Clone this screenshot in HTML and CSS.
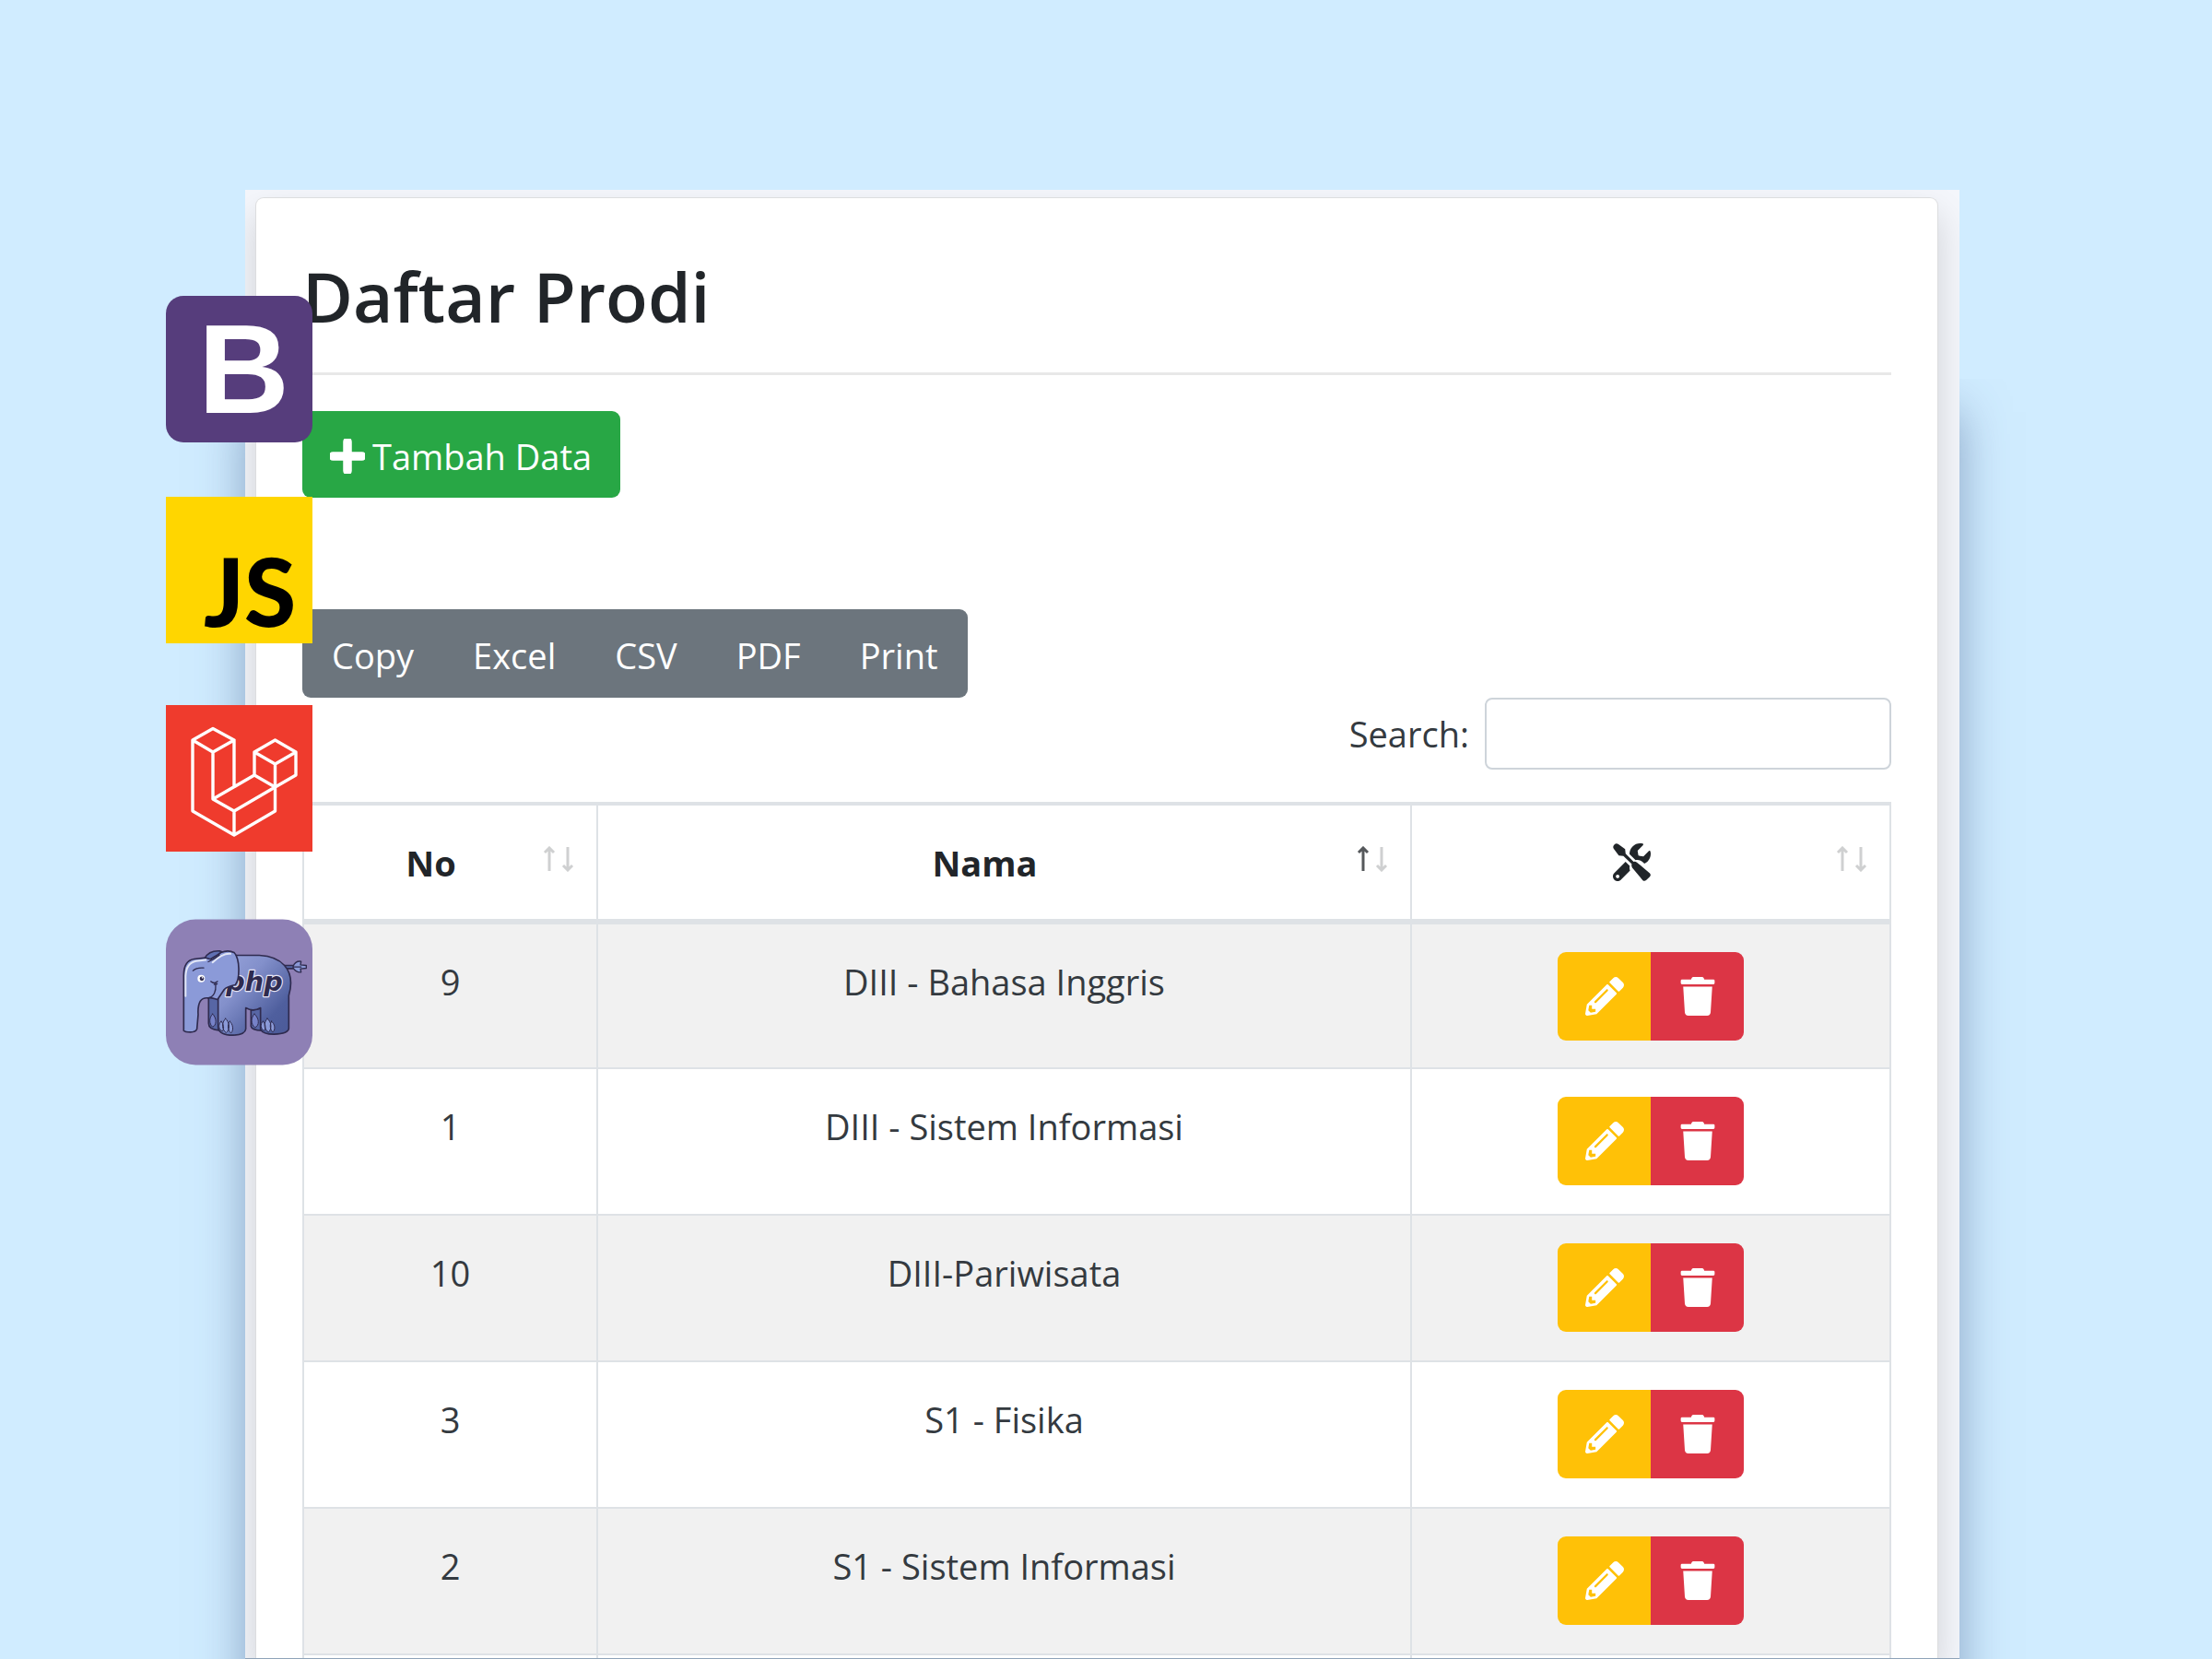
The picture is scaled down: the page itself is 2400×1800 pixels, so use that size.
FILE: index.html
```html
<!DOCTYPE html>
<html lang="id">
<head>
<meta charset="utf-8">
<title>Daftar Prodi</title>
<link rel="stylesheet" href="styles.css">
</head>
<body>
<svg class="sprite" aria-hidden="true">
  <symbol id="i-pencil" viewBox="0 0 512 512"><path d="M497.9 142.1l-46.1 46.1c-4.7 4.7-12.3 4.7-17 0l-111-111c-4.7-4.7-4.7-12.3 0-17l46.1-46.1c18.7-18.7 49.1-18.7 67.9 0l60.1 60.1c18.8 18.7 18.8 49.1 0 67.9zM284.2 99.8L21.6 362.4.4 483.9c-2.9 16.4 11.4 30.6 27.8 27.8l121.5-21.3 262.6-262.6c4.7-4.7 4.7-12.3 0-17l-111-111c-4.8-4.7-12.4-4.7-17.1 0zM124.1 339.9c-5.5-5.5-5.5-14.3 0-19.8l154-154c5.5-5.5 14.3-5.5 19.8 0s5.5 14.3 0 19.8l-154 154c-5.5 5.5-14.3 5.5-19.8 0zM88 424h48v36.3l-64.5 11.3-31.1-31.1L51.7 376H88v48z"/></symbol>
  <symbol id="i-trash" viewBox="0 0 448 512"><path d="M432 32H312l-9.4-18.7A24 24 0 0 0 281.1 0H166.8a23.72 23.72 0 0 0-21.4 13.3L136 32H16A16 16 0 0 0 0 48v32a16 16 0 0 0 16 16h416a16 16 0 0 0 16-16V48a16 16 0 0 0-16-16zM53.2 467a48 48 0 0 0 47.9 45h245.8a48 48 0 0 0 47.9-45L416 128H32z"/></symbol>
  <symbol id="i-up" viewBox="0 0 14 28"><path d="M7 27V2M2 7l5-5 5 5" fill="none" stroke="currentColor" stroke-width="3"/></symbol>
  <symbol id="i-down" viewBox="0 0 14 28"><path d="M7 1v25M2 21l5 5 5-5" fill="none" stroke="currentColor" stroke-width="3"/></symbol>
</svg>

<main class="frame">
  <div class="shadow-clip" aria-hidden="true"><div class="shadow"></div></div>
  <div class="backdrop">
    <section class="card">
      <h1 class="title">Daftar Prodi</h1>
      <hr class="rule">
      <button class="btn-add" type="button">
        <svg class="icon-plus" viewBox="0 0 36 36"><path d="M18 3v30M3 18h30" fill="none" stroke="currentColor" stroke-width="9" stroke-linecap="round"/></svg>
        Tambah Data
      </button>
      <div class="exports">
        <button type="button">Copy</button><button type="button">Excel</button><button type="button">CSV</button><button type="button">PDF</button><button type="button">Print</button>
      </div>
      <div class="search">
        <label for="search">Search:</label>
        <input id="search" type="search">
      </div>
      <table class="grid">
        <colgroup><col class="col-no"><col><col class="col-tools"></colgroup>
        <thead>
          <tr>
            <th>No<span class="sort"><svg><use href="#i-up"/></svg><svg><use href="#i-down"/></svg></span></th>
            <th>Nama<span class="sort"><svg class="on"><use href="#i-up"/></svg><svg><use href="#i-down"/></svg></span></th>
            <th><svg class="icon-tools" viewBox="0 0 512 512"><path d="M12 75Q-8 45 18 18Q45-8 75 12L165 78L172 142L280 250Q300 240 325 258L500 405Q520 430 500 452L450 500Q425 520 402 498L262 330Q246 300 256 280L142 172L80 165ZM331.700 225c28.300 0 54.900 11 74.900 31l19.400 19.400c15.800-6.900 30.800-16.500 43.800-29.500 37.100-37.100 49.700-89.300 37.900-136.700-2.200-9-13.500-12.100-20.100-5.500l-74.400 74.400-67.900-11.300L334 98.900l74.400-74.400c6.600-6.600 3.400-17.900-5.700-20.200-47.400-11.700-99.600.9-136.600 37.900-28.500 28.500-41.900 66.100-41.200 103.600l82.100 82.100c8.100-1.900 16.500-2.900 24.700-2.900zm-103.900 82l-56.700-56.700L18.700 402.800c-25 25-25 65.500 0 90.500s65.500 25 90.500 0l123.600-123.600c-7.600-19.900-9.900-41.600-5-62.700zM64 472c-13.200 0-24-10.800-24-24 0-13.300 10.700-24 24-24s24 10.700 24 24c0 13.200-10.700 24-24 24z"/></svg><span class="sort"><svg><use href="#i-up"/></svg><svg><use href="#i-down"/></svg></span></th>
          </tr>
        </thead>
        <tbody>
          <tr><td>9</td><td>DIII - Bahasa Inggris</td><td><div class="actions"><button class="edit" type="button" aria-label="Edit"><svg><use href="#i-pencil"/></svg></button><button class="delete" type="button" aria-label="Hapus"><svg><use href="#i-trash"/></svg></button></div></td></tr>
          <tr><td>1</td><td>DIII - Sistem Informasi</td><td><div class="actions"><button class="edit" type="button" aria-label="Edit"><svg><use href="#i-pencil"/></svg></button><button class="delete" type="button" aria-label="Hapus"><svg><use href="#i-trash"/></svg></button></div></td></tr>
          <tr><td>10</td><td>DIII-Pariwisata</td><td><div class="actions"><button class="edit" type="button" aria-label="Edit"><svg><use href="#i-pencil"/></svg></button><button class="delete" type="button" aria-label="Hapus"><svg><use href="#i-trash"/></svg></button></div></td></tr>
          <tr><td>3</td><td>S1 - Fisika</td><td><div class="actions"><button class="edit" type="button" aria-label="Edit"><svg><use href="#i-pencil"/></svg></button><button class="delete" type="button" aria-label="Hapus"><svg><use href="#i-trash"/></svg></button></div></td></tr>
          <tr><td>2</td><td>S1 - Sistem Informasi</td><td><div class="actions"><button class="edit" type="button" aria-label="Edit"><svg><use href="#i-pencil"/></svg></button><button class="delete" type="button" aria-label="Hapus"><svg><use href="#i-trash"/></svg></button></div></td></tr>
          <tr class="tail"><td></td><td></td><td></td></tr>
        </tbody>
      </table>
    </section>
  </div>

  <div class="logos">
    <svg class="logo logo-bootstrap" viewBox="0 0 159 159" role="img" aria-label="Bootstrap">
      <rect width="159" height="159" rx="19" fill="#563d7c"/>
      <text x="35" y="127" class="letter-b">B</text>
    </svg>
    <svg class="logo logo-js" viewBox="0 0 159 159" role="img" aria-label="JavaScript">
      <rect width="159" height="159" fill="#ffd600"/>
      <text x="41" y="141" class="letters-js">JS</text>
    </svg>
    <svg class="logo logo-laravel" viewBox="0 0 159 159" role="img" aria-label="Laravel">
      <rect width="159" height="159" fill="#ef3b2d"/>
      <path fill="none" stroke="#fff" stroke-width="3.4" stroke-linejoin="round" d="M29 38L51 25.500L74 38L51 51ZM29 38V115L74 141L118.500 115V89L74 115V141M51 51V102L74 115M74 38V88M51 102L96 76V51L118.500 38L141 51V76L118.500 89L96 76M96 51L118.500 64L141 51M118.500 64V89"/>
    </svg>
    <svg class="logo logo-php" viewBox="60 50 477 474" role="img" aria-label="PHP">
      <defs>
        <linearGradient id="body" x1="0" y1="0" x2="1" y2="1"><stop offset="0" stop-color="#99a5dc"/><stop offset=".35" stop-color="#8390cb"/><stop offset=".75" stop-color="#4f5f9e"/><stop offset="1" stop-color="#4b5a98"/></linearGradient>
      </defs>
      <rect x="60" y="50" width="477" height="474" rx="97" fill="#8e80b5"/>
      <g stroke="#2f2b4f" stroke-width="5" stroke-linejoin="round" stroke-linecap="round">
        <path fill="#5766a5" d="M199 300V388Q199 408 232 411V300ZM337 345V398Q340 411 372 412V340Z"/>
        <path fill="#7682c8" stroke-width="3" d="M212 358c-12 12-12 32 0 42c13-4 15-28 0-42zM348 358c-12 12-12 34 2 44c15-6 15-30-2-44z"/>
        <path fill="#5766a5" d="M446 200H478V210H446Z"/>
        <path fill="#8b9ad8" stroke-width="4" d="M474 203Q482 184 500 187L498 198L517 200V209L498 211L500 222Q484 224 474 208ZM474 205H500"/>
        <path fill="url(#body)" d="M230 300V402Q234 427 278 427Q318 426 320 407V338Q344 352 368 338V408Q376 424 412 424Q458 422 460 405V298Q478 236 446 200Q420 170 364 167H288L230 200Z"/>
        <text x="256" y="284" class="letters-php">php</text>
        <path fill="#6070b2" d="M186 177Q200 151 235 153L246 157L210 182Z"/>
        <path fill="#8b9ad8" d="M118 412V232Q118 184 152 179L190 175L205 180Q228 166 239 158Q262 148 282 158Q296 172 297 210Q298 250 286 263Q260 268 250 278L228 311Q206 304 198 306Q180 304 172 316Q163 332 165 360L161 407Q157 417 140 417Q122 417 118 412Z"/>
        <path fill="none" stroke="#fff" stroke-width="6" opacity=".75" d="M124 300V235Q126 192 158 186L190 182M212 190Q244 160 270 162"/>
        <path fill="none" stroke-width="4" d="M148 217Q160 206 183 208M198 188Q218 180 234 166M222 262Q223 280 218 290Q212 303 198 306M206 252Q218 262 228 252M217 262L227 260"/>
        <path fill="#8b9ad8" stroke-width="3" d="M240 382c-10 8-10 26 4 32c6-6 5-24-4-32zM254 373c-14 14-12 36 2 46c14-10 12-34-2-46zM268 382c-10 12-6 30 4 38c10-10 6-30-4-38zM376 382c-10 8-8 26 4 30c6-6 5-22-4-30zM390 373c-14 14-10 36 4 44c12-10 10-34-4-44zM404 382c-8 12-4 28 4 35c10-10 6-27-4-35z"/>
      </g>
      <circle cx="175" cy="243" r="12" fill="#fff"/><circle cx="177" cy="243" r="7" fill="#2f2b4f"/><circle cx="179" cy="240" r="2.500" fill="#fff"/>
    </svg>
  </div>
</main>
</body>
</html>
```
FILE: styles.css
```css
* { box-sizing: border-box; }
body {
  margin: 0;
  min-height: 100vh;
  background: #d0ecff;
  color: #212529;
  font-family: "Open Sans", "Noto Sans", sans-serif;
  font-size: 38px;
  line-height: 56px;
}
button, input { font: inherit; }
.sprite { position: absolute; width: 0; height: 0; }
svg { fill: currentColor; }

.frame { position: relative; margin: 0 274px 0 266px; padding-top: 206px; }
.backdrop {
  position: relative;
  overflow: hidden;
  padding: 8px 23px 0 11px;
  background: #f4f6fb;
  border-bottom: 1px solid #8fa3b8;
}
.shadow-clip { position: absolute; inset: 411px -80px 0 -80px; overflow: hidden; }
.shadow {
  position: absolute;
  inset: 36px 80px -80px 80px;
  box-shadow: 0 0 48px rgba(66, 92, 138, .5);
}
.card {
  padding: 60px 50px 0;
  background: #fff;
  border: 1px solid #dcdddf;
  border-bottom: 0;
  border-radius: 9px 9px 0 0;
  box-shadow: 0 19px 38px rgba(0, 0, 0, .15);
}
.title { margin: 0; font-size: 75px; line-height: 92px; font-weight: 600; }
.rule { margin: 37px 0 39px; border: 0; border-top: 3px solid #e8e8e8; }
.btn-add {
  display: flex;
  align-items: center;
  gap: 8px;
  height: 94px;
  padding: 4px 31px 0 30px;
  border: 0;
  border-radius: 9px;
  background: #28a745;
  color: #fff;
}
.icon-plus { width: 38px; height: 38px; }
.exports { display: flex; width: fit-content; margin-top: 121px; border-radius: 9px; overflow: hidden; }
.exports button { height: 96px; padding: 4px 32px 0; border: 0; background: #6c757d; color: #fff; }
.search { display: flex; justify-content: flex-end; align-items: center; gap: 17px; color: #343a40; }
.search input {
  width: 441px;
  height: 78px;
  padding: 0 19px;
  border: 2px solid #ced4da;
  border-radius: 8px;
  background: #fff;
}
.grid { width: 100%; margin-top: 35px; border-collapse: collapse; table-layout: fixed; text-align: center; }
.col-no { width: 319px; }
.col-tools { width: 520px; }
.grid th, .grid td { border: 2px solid #dee2e6; }
.grid th {
  position: relative;
  height: 128px;
  padding: 0 71px 0 29px;
  border-top-width: 4px;
  border-bottom-width: 6px;
  font-weight: 700;
}
.sort { position: absolute; right: 24px; top: 44px; display: flex; gap: 6px; color: #cfd0d1; }
.sort svg { width: 14px; height: 28px; }
.sort .on { color: #55585b; }
.icon-tools { display: block; width: 41px; height: 41px; margin: 0 auto; }
.grid td { height: 159px; padding: 34px 29px 0; vertical-align: top; color: #343a40; }
.grid td:last-child { padding-top: 30px; }
.grid tbody tr:nth-child(odd) { background: #f1f1f1; }
.grid tbody .tail td { height: 4px; padding: 0; border-bottom: 0; background: #fff; }
.actions { display: flex; width: 202px; margin: 0 auto; border-radius: 9px; overflow: hidden; }
.actions button {
  display: flex;
  flex: 1;
  align-items: center;
  justify-content: center;
  height: 96px;
  padding: 0;
  border: 0;
  color: #fff;
}
.actions svg { width: 42px; height: 42px; }
.edit { background: #ffc107; }
.delete { background: #dc3545; }

.logos { position: absolute; top: 321px; left: -86px; }
.logo { display: block; width: 159px; height: 159px; }
.logo-js { margin-top: 59px; }
.logo-laravel { margin-top: 67px; }
.logo-php { margin-top: 73px; }
.letter-b { font: 700 137px "Liberation Sans", sans-serif; fill: #fff; }
.letters-js { font: 900 102px Lato, sans-serif; fill: #000; }
.letters-php {
  font: italic 700 86px "DejaVu Sans", sans-serif;
  fill: #2f2b4f;
  stroke: #e6e4f4;
  stroke-width: 7px;
  paint-order: stroke;
}
```
